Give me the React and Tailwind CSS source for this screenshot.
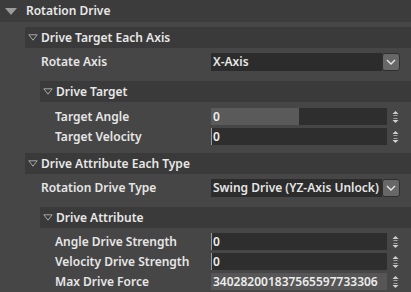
import React from 'react';

const font = { fontFamily: '"Noto Sans", "Open Sans", sans-serif' };

// hollow disclosure triangle used by the sub sections
const OpenTri = () => (
  <svg width="10" height="7" viewBox="0 0 10 7" className="shrink-0">
    <path d="M0.8 0.8 H9.2 L5 6.2 Z" fill="none" stroke="#a8a8a8" strokeWidth="1" />
  </svg>
);

const Chevron = () => (
  <div className="flex h-full w-[18px] shrink-0 items-center justify-center rounded-[3px] border border-[#2f2f2f] bg-[#676767]">
    <svg width="10" height="6" viewBox="0 0 10 6">
      <path d="M1 1 L5 5 L9 1" fill="none" stroke="#e6e6e6" strokeWidth="1.4" />
    </svg>
  </div>
);

const Spinner = () => (
  <svg width="7" height="14" viewBox="0 0 7 14" className="shrink-0">
    <path d="M3.5 1 L6.5 4 H0.5 Z" fill="#d0d0d0" />
    <rect x="1.5" y="5" width="4" height="1" fill="#a0a0a0" />
    <rect x="1.5" y="8" width="4" height="1" fill="#a0a0a0" />
    <path d="M0.5 10 H6.5 L3.5 13 Z" fill="#d0d0d0" />
  </svg>
);

const Label = ({ children, width }) => (
  <div className={`${width} shrink-0 whitespace-nowrap text-[12px] font-semibold leading-[16px] text-[#e6e6e6]`}>{children}</div>
);

const Dropdown = ({ value }) => (
  <div className="flex h-[18px] w-[189px] items-stretch">
    <div className="flex flex-1 items-center whitespace-nowrap bg-[#2c2c2c] pl-[2px] text-[12px] font-semibold leading-[16px] text-[#e6e6e6]">
      {value}
    </div>
    <Chevron />
  </div>
);

// caret only shows on the plain dark fields
const NumberField = ({ value, fill, light }) => (
  <div className="flex items-center">
    <div
      className={`relative flex h-[17px] w-[176px] items-center overflow-hidden ${light ? 'bg-[#565656] pl-[2px]' : fill ? 'bg-[#2e2e2e] pl-[2px]' : 'border-l border-[#9a9a9a] bg-[#2e2e2e] pl-[1px]'} text-[12px] font-semibold leading-[16px] text-[#ececec]`}
    >
      {fill && <div className="absolute left-0 top-0 h-full bg-[#5a5a5a]" style={{ width: fill }} />}
      <span className="relative whitespace-nowrap">{value}</span>
    </div>
    <div className="ml-[5px] flex">
      <Spinner />
    </div>
  </div>
);

const Header = ({ title, indent }) => (
  <div className={`flex h-[21px] items-center bg-[#3a3a3a] ${indent}`}>
    <div className="ml-[3px] flex">
      <OpenTri />
    </div>
    <span className="ml-[3px] whitespace-nowrap text-[12px] font-semibold leading-[16px] text-[#e8e8e8]">{title}</span>
  </div>
);

export default function App() {
  return (
    <div className="h-[292px] w-[411px] overflow-hidden bg-[#464646]" style={font}>
      {/* top level group */}
      <div className="flex h-[22px] items-center bg-[#3c3c3c]">
        <svg width="12" height="7" viewBox="0 0 12 7" className="ml-[5px]">
          <path d="M0 0 H12 L6 7 Z" fill="#9c9c9c" />
        </svg>
        <span className="ml-[9px] whitespace-nowrap text-[12px] font-semibold leading-[16px] text-[#e8e8e8]">Rotation Drive</span>
      </div>

      <div className="mt-[5px]">
        <Header title="Drive Target Each Axis" indent="ml-[25px]" />
      </div>
      <div className="mt-[5px] flex items-center pl-[41px]">
        <Label width="w-[170px]">Rotate Axis</Label>
        <Dropdown value="X-Axis" />
      </div>

      <div className="mt-[10px]">
        <Header title="Drive Target" indent="ml-[40px]" />
      </div>
      <div className="mt-[6px] flex items-center pl-[55px]">
        <Label width="w-[156px]">Target Angle</Label>
        <NumberField value="0" fill="88px" />
      </div>
      <div className="mt-[3px] flex items-center pl-[55px]">
        <Label width="w-[156px]">Target Velocity</Label>
        <NumberField value="0" />
      </div>

      <div className="mt-[8px]">
        <Header title="Drive Attribute Each Type" indent="ml-[25px]" />
      </div>
      <div className="mt-[5px] flex items-center pl-[41px]">
        <Label width="w-[170px]">Rotation Drive Type</Label>
        <Dropdown value="Swing Drive (YZ-Axis Unlock)" />
      </div>

      <div className="mt-[10px]">
        <Header title="Drive Attribute" indent="ml-[40px]" />
      </div>
      <div className="mt-[5px] flex items-center pl-[55px]">
        <Label width="w-[156px]">Angle Drive Strength</Label>
        <NumberField value="0" />
      </div>
      <div className="mt-[3px] flex items-center pl-[55px]">
        <Label width="w-[156px]">Velocity Drive Strength</Label>
        <NumberField value="0" />
      </div>
      <div className="mt-[3px] flex items-center pl-[55px]">
        <Label width="w-[156px]">Max Drive Force</Label>
        <NumberField value="340282001837565597733306" light />
      </div>
    </div>
  );
}
